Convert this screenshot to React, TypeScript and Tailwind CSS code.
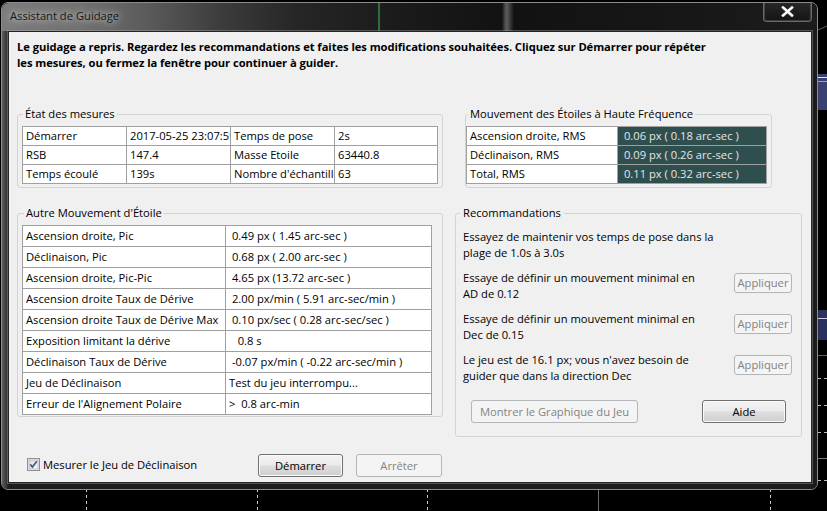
import React from "react";

function Backdrop() {
  const dashedX = [86, 257, 427, 770];
  return (
    <svg className="absolute inset-0" width="827" height="511" viewBox="0 0 827 511">
      <rect x="0" y="0" width="827" height="511" fill="#000" />
      {dashedX.map((x) => (
        <line key={x} x1={x + 0.5} y1={489} x2={x + 0.5} y2={511} stroke="#c8c8c8" strokeDasharray="3 3" />
      ))}
      <line x1="598.5" y1="489" x2="598.5" y2="511" stroke="#6e6e6e" />
      <line x1="818" y1="30" x2="827" y2="26" stroke="#5a5a5a" />
      <rect x="818" y="74" width="9" height="36" fill="#3a4170" />
      <line x1="818" y1="77.5" x2="827" y2="77.5" stroke="#dfe2f3" />
      <line x1="818" y1="81.5" x2="827" y2="81.5" stroke="#98a0cf" />
      <rect x="818" y="310" width="9" height="30" fill="#2b2f5c" />
      <line x1="818" y1="318.5" x2="827" y2="318.5" stroke="#c8cbe6" />
      <line x1="818" y1="355.5" x2="827" y2="355.5" stroke="#5e5e5e" />
      {[378, 405, 432, 480].map((y) => (
        <line key={y} x1="818" y1={y + 0.5} x2="827" y2={y + 0.5} stroke="#bdbdbd" strokeDasharray="3 3" />
      ))}
      <line x1="818" y1="458.5" x2="827" y2="458.5" stroke="#7a7a7a" />
    </svg>
  );
}

function CloseGlyph() {
  return (
    <svg width="13" height="11" viewBox="0 0 13 11">
      <path d="M2 1.5 L11 9.5 M11 1.5 L2 9.5" stroke="#3a3a3a" strokeWidth="4" strokeLinecap="round" />
      <path d="M2 1.5 L11 9.5 M11 1.5 L2 9.5" stroke="#ffffff" strokeWidth="2.4" strokeLinecap="square" />
    </svg>
  );
}

function TitleBar() {
  return (
    <div className="flex h-[28px] shrink-0 items-start justify-between rounded-t-[6px] bg-[linear-gradient(to_right,transparent_376px,#2e6e3c_376px,#2e6e3c_378px,transparent_378px),linear-gradient(to_right,transparent_500px,#4a4a4a_503px,#5c5c5c_505px,#3a3a3a_508px,transparent_512px),linear-gradient(to_right,#7c7c7c_0%,#707070_10%,#5a5a5a_18%,#3c3c3c_27%,#262626_36%,#1b1b1b_48%,#121212_62%,#161616_80%,#1c1c1c_100%)]">
      <div className="pl-[8px] pt-[5px] text-[#161616] [text-shadow:0_0_6px_rgba(255,255,255,0.75),0_0_12px_rgba(255,255,255,0.45)]">
        Assistant de Guidage
      </div>
      <div className="mr-[5px] mt-[-1px] flex h-[20px] w-[49px] items-center justify-center rounded-b-[4px] border border-t-0 border-[#6a6a6a] bg-[linear-gradient(to_bottom,rgba(255,255,255,0.06),rgba(0,0,0,0.25))] shadow-[inset_0_0_0_1px_rgba(255,255,255,0.18)]">
        <CloseGlyph />
      </div>
    </div>
  );
}

function WinButton({
  children,
  disabled,
  className,
}: {
  children: React.ReactNode;
  disabled?: boolean;
  className: string;
}) {
  return (
    <button
      type="button"
      disabled={disabled}
      className={`${className} flex shrink-0 items-center justify-center rounded-[3px] border leading-[16px] ${
        disabled
          ? "border-[#b2b6b9] bg-[#f4f4f4] text-[#838383]"
          : "border-[#707070] bg-[linear-gradient(to_bottom,#f3f3f3_0%,#ebebeb_48%,#dddddd_52%,#cfcfcf_100%)] text-black shadow-[inset_0_0_0_1px_#fbfbfb]"
      }`}
    >
      {children}
    </button>
  );
}

const cellBase =
  "overflow-hidden whitespace-pre border-r border-b border-[#a0a0a0] pl-[3px]";

function StatusTable() {
  const rows = [
    ["Démarrer", "2017-05-25 23:07:59", "Temps de pose", "2s"],
    ["RSB", "147.4", "Masse Etoile", "63440.8"],
    ["Temps écoulé", "139s", "Nombre d'échantillons", "63"],
  ];
  return (
    <div className="grid grid-cols-[104px_104px_104px_103px] border-l border-t border-[#a0a0a0] bg-white">
      {rows.flat().map((c, i) => (
        <div key={i} className={`${cellBase} h-[19px] leading-[18px]`}>
          {c}
        </div>
      ))}
    </div>
  );
}

function HighFreqTable() {
  const rows = [
    ["Ascension droite, RMS", " 0.06 px ( 0.18 arc-sec )"],
    ["Déclinaison, RMS", " 0.09 px ( 0.26 arc-sec )"],
    ["Total, RMS", " 0.11 px ( 0.32 arc-sec )"],
  ];
  return (
    <div className="grid grid-cols-[151px_149px] border-l border-t border-[#a0a0a0]">
      {rows.map(([a, b], i) => (
        <React.Fragment key={i}>
          <div className={`${cellBase} h-[19px] bg-white leading-[18px]`}>{a}</div>
          <div className={`${cellBase} h-[19px] bg-[#2f4f4f] leading-[18px] text-[#e6e6e6]`}>{b}</div>
        </React.Fragment>
      ))}
    </div>
  );
}

function OtherTable() {
  const rows = [
    ["Ascension droite, Pic", " 0.49 px ( 1.45 arc-sec )"],
    ["Déclinaison, Pic", " 0.68 px ( 2.00 arc-sec )"],
    ["Ascension droite, Pic-Pic", " 4.65 px (13.72 arc-sec )"],
    ["Ascension droite Taux de Dérive", " 2.00 px/min ( 5.91 arc-sec/min )"],
    ["Ascension droite Taux de Dérive Max", " 0.10 px/sec ( 0.28 arc-sec/sec )"],
    ["Exposition limitant la dérive", "   0.8 s"],
    ["Déclinaison Taux de Dérive", " -0.07 px/min ( -0.22 arc-sec/min )"],
    ["Jeu de Déclinaison", "Test du jeu interrompu..."],
    ["Erreur de l'Alignement Polaire", ">  0.8 arc-min"],
  ];
  return (
    <div className="grid grid-cols-[203px_206px] border-l border-t border-[#a0a0a0] bg-white">
      {rows.map(([a, b], i) => (
        <React.Fragment key={i}>
          <div className={`${cellBase} h-[21px] leading-[20px]`}>{a}</div>
          <div className={`${cellBase} h-[21px] leading-[20px]`}>{b}</div>
        </React.Fragment>
      ))}
    </div>
  );
}

function CheckBox() {
  return (
    <svg width="13" height="13" viewBox="0 0 13 13" className="shrink-0">
      <defs>
        <linearGradient id="cbfill" x1="0" y1="0" x2="1" y2="1">
          <stop offset="0" stopColor="#d8dbe0" />
          <stop offset="1" stopColor="#fbfbfb" />
        </linearGradient>
      </defs>
      <rect x="0.5" y="0.5" width="12" height="12" fill="#f4f4f4" stroke="#8e8f8f" />
      <rect x="2" y="2" width="9" height="9" fill="url(#cbfill)" stroke="#aeb3b9" strokeWidth="0.8" />
      <path d="M3.3 6.4 L5.4 9 L9.8 3.2" fill="none" stroke="#4a5d8c" strokeWidth="1.8" />
    </svg>
  );
}

function Client() {
  return (
    <div className="flex flex-1 flex-col border border-[#242424] bg-[#f0f0f0] pl-[8px] pr-[9px] pt-[7px] shadow-[0_0_0_1px_rgba(190,190,190,0.35)]">
      <div className="font-bold tracking-[-0.06px]">
        <div className="whitespace-nowrap">
          Le guidage a repris. Regardez les recommandations et faites les modifications souhaitées. Cliquez sur Démarrer pour répéter
        </div>
        <div className="whitespace-nowrap">les mesures, ou fermez la fenêtre pour continuer à guider.</div>
      </div>

      <div className="mt-[35px] flex items-start gap-[12px]">
        <div className="flex w-[426px] flex-col gap-[17px]">
          <fieldset className="rounded-[3px] border border-[#d3d3d3] px-[4px] pb-[3px] pt-[4px]">
            <legend className="ml-[1px] px-[2px]">État des mesures</legend>
            <StatusTable />
          </fieldset>
          <fieldset className="rounded-[3px] border border-[#d3d3d3] pb-[1px] pl-[4px] pr-[10px] pt-[4px]">
            <legend className="ml-[2px] px-[2px]">Autre Mouvement d'Étoile</legend>
            <OtherTable />
          </fieldset>
        </div>

        <div className="flex w-[347px] flex-col gap-[17px]">
          <fieldset className="ml-[10px] w-[307px] rounded-[3px] border border-[#d3d3d3] pb-[3px] pl-0 pr-[4px] pt-[4px]">
            <legend className="ml-[2px] px-[2px]">Mouvement des Étoiles à Haute Fréquence</legend>
            <HighFreqTable />
          </fieldset>
          <fieldset className="rounded-[3px] border border-[#d3d3d3] pb-[13px] pl-[7px] pr-[9px] pt-[8px]">
            <legend className="ml-[-3px] px-[3px]">Recommandations</legend>
            <div className="flex flex-col gap-[9px]">
              <div className="h-[32px]">
                Essayez de maintenir vos temps de pose dans la
                <br />
                plage de 1.0s à 3.0s
              </div>
              <div className="flex h-[32px] items-start justify-between">
                <div>
                  Essaye de définir un mouvement minimal en
                  <br />
                  AD de 0.12
                </div>
                <WinButton disabled className="mt-[3px] h-[20px] w-[58px]">
                  Appliquer
                </WinButton>
              </div>
              <div className="flex h-[32px] items-start justify-between">
                <div>
                  Essaye de définir un mouvement minimal en
                  <br />
                  Dec de 0.15
                </div>
                <WinButton disabled className="mt-[3px] h-[20px] w-[58px]">
                  Appliquer
                </WinButton>
              </div>
              <div className="flex h-[32px] items-start justify-between">
                <div>
                  Le jeu est de 16.1 px; vous n'avez besoin de
                  <br />
                  guider que dans la direction Dec
                </div>
                <WinButton disabled className="mt-[3px] h-[20px] w-[58px]">
                  Appliquer
                </WinButton>
              </div>
            </div>
            <div className="mt-[16px] flex items-center justify-between">
              <WinButton disabled className="ml-[8px] h-[23px] w-[167px]">
                Montrer le Graphique du Jeu
              </WinButton>
              <WinButton className="mr-[6px] h-[23px] w-[84px]">Aide</WinButton>
            </div>
          </fieldset>
        </div>
      </div>

      <div className="mt-[17px] flex h-[23px] items-center">
        <div className="ml-[10px] flex w-[231px] items-center gap-[3px] pb-[2px]">
          <CheckBox />
          <span>Mesurer le Jeu de Déclinaison</span>
        </div>
        <WinButton className="h-[23px] w-[85px]">Démarrer</WinButton>
        <WinButton disabled className="ml-[13px] h-[23px] w-[86px]">
          Arrêter
        </WinButton>
      </div>
    </div>
  );
}

export default function App() {
  return (
    <div className="relative h-[511px] w-[827px] overflow-hidden bg-black font-['Open_Sans',sans-serif] text-[11.2px] leading-[16px] text-black">
      <Backdrop />
      <div className="relative ml-[1px] mt-[2px] flex h-[488px] w-[817px] flex-col overflow-hidden rounded-[7px] border border-[#8c8c8c] bg-[#171717]">
        <TitleBar />
        <div className="flex flex-1 bg-[linear-gradient(to_right,#5e5e5e_0px,#3a3a3a_4px,#1c1c1c_7px,#1c1c1c_100%)] pb-[6px] pl-[6px] pr-[5px]">
          <Client />
        </div>
      </div>
    </div>
  );
}
